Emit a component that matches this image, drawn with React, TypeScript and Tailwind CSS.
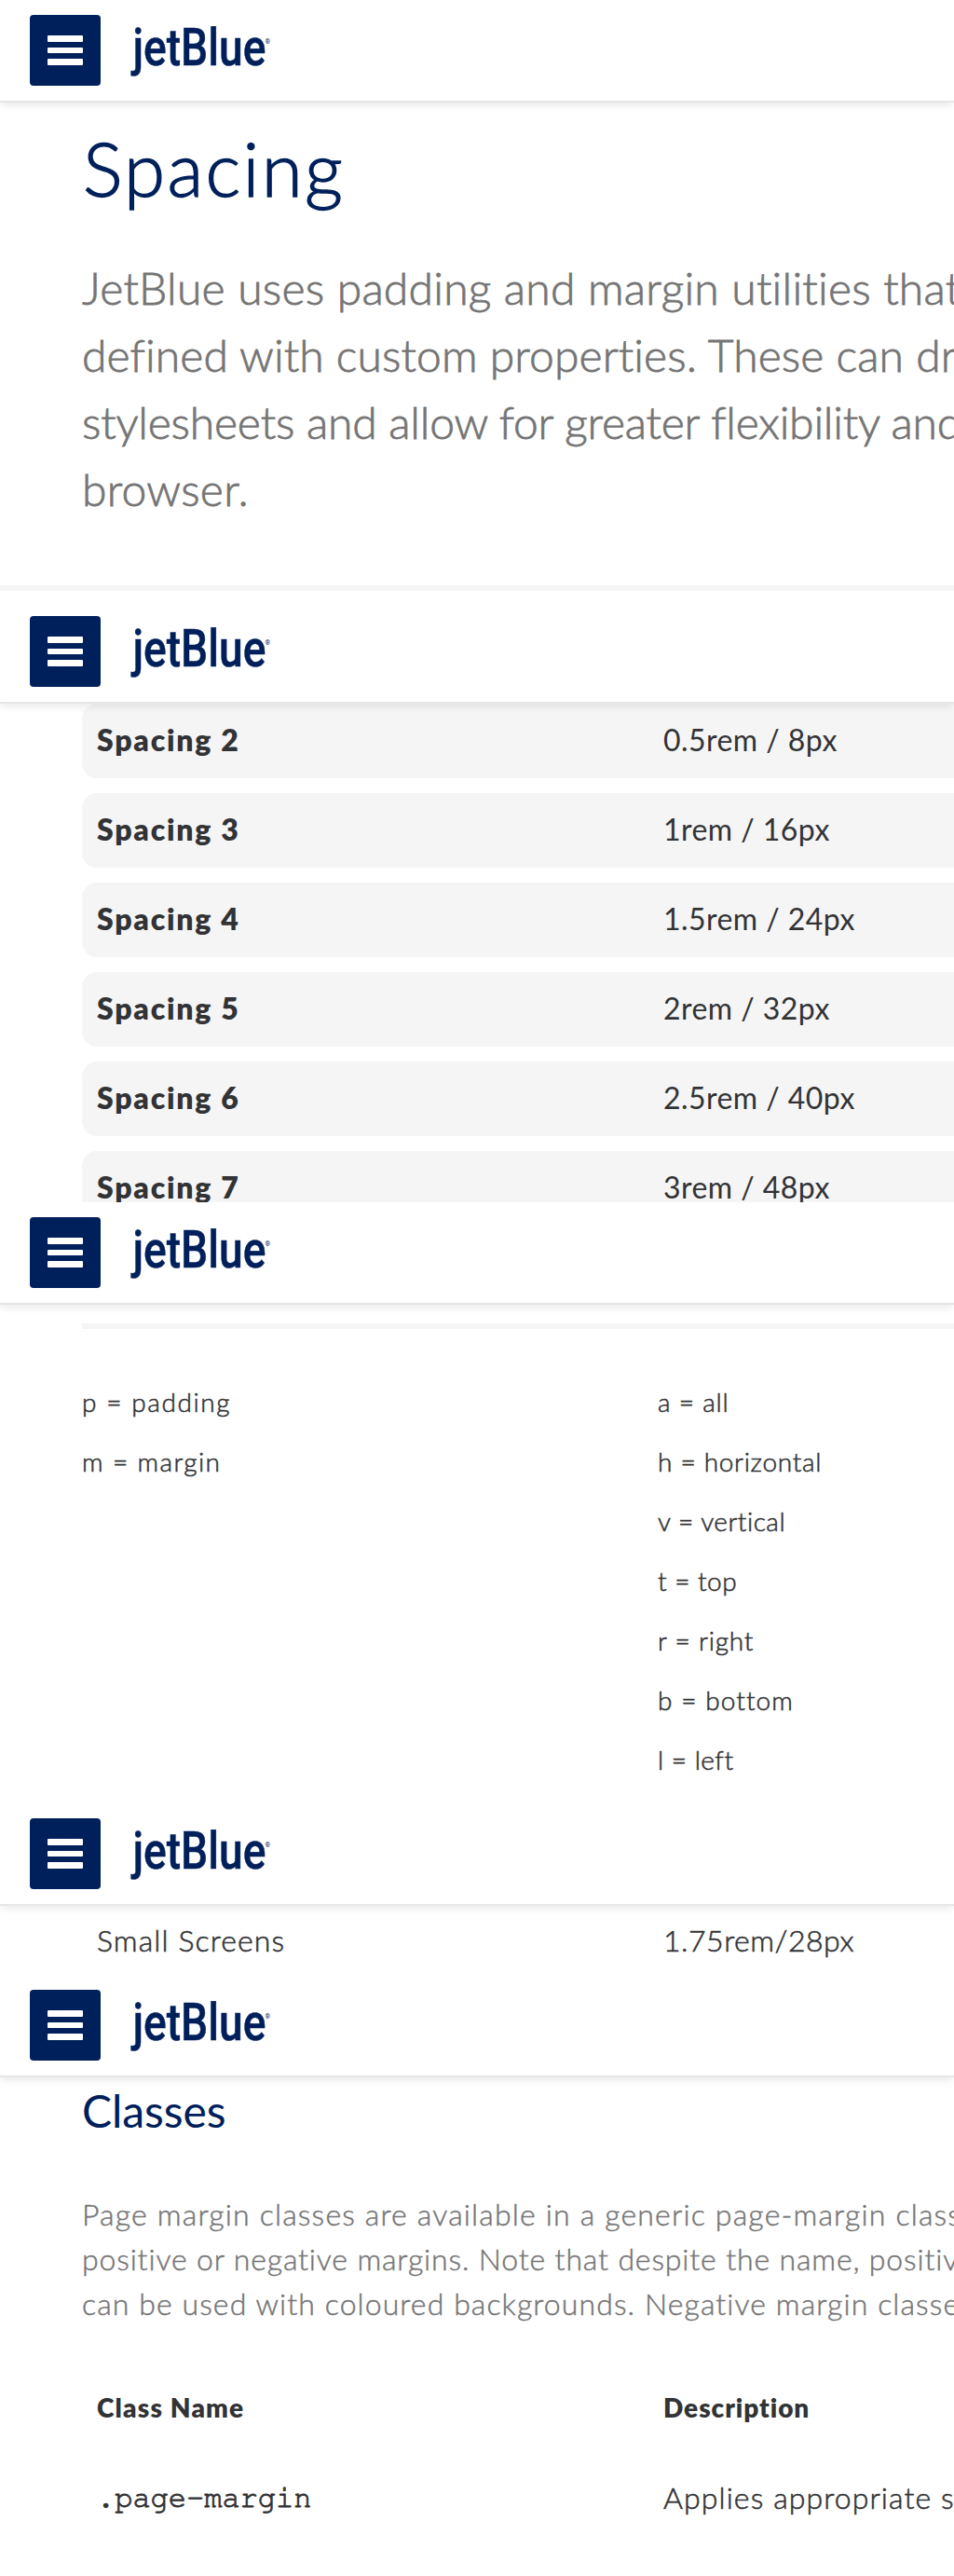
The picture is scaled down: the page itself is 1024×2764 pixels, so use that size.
import type { ReactNode } from "react";

function Logo() {
  return (
    <svg className="ml-8 mt-[8px] h-[60px] w-[156px]" viewBox="140 24 156 60" role="img" aria-label="jetBlue">
      <text
        transform="translate(142.4 69.5) scale(0.84 1)"
        className="fill-[#00205b] stroke-[#00205b] font-[Roboto] text-[55px] font-medium"
        strokeWidth="0.5"
      >
        jetBlue
      </text>
      <text x="284.4" y="47.2" className="fill-[#00205b] font-[Roboto] text-[7px]">
        ®
      </text>
    </svg>
  );
}

function Header() {
  return (
    <header className="relative z-10 flex h-[110px] shrink-0 items-start border-b-2 border-[#e6e6e6] bg-white px-8 pt-4 shadow-[0_4px_8px_-1px_rgba(0,0,0,0.09)]">
      <button className="flex size-[76px] flex-col items-center justify-center gap-[6.3px] rounded bg-[#00205b]" aria-label="Menu">
        <span className="h-[6.3px] w-[38px] rounded-[1px] bg-white" />
        <span className="h-[6.3px] w-[38px] rounded-[1px] bg-white" />
        <span className="h-[6.3px] w-[38px] rounded-[1px] bg-white" />
      </button>
      <Logo />
    </header>
  );
}

function Section({ height, children }: { height: string; children: ReactNode }) {
  return (
    <section className={`flex flex-col overflow-hidden ${height}`}>
      <Header />
      {children}
    </section>
  );
}

const spacings = [
  { name: "Spacing 2", value: "0.5rem / 8px" },
  { name: "Spacing 3", value: "1rem / 16px" },
  { name: "Spacing 4", value: "1.5rem / 24px" },
  { name: "Spacing 5", value: "2rem / 32px" },
  { name: "Spacing 6", value: "2.5rem / 40px" },
  { name: "Spacing 7", value: "3rem / 48px" },
];

const properties = [
  { text: "p = padding", tracking: "tracking-[1.6px]" },
  { text: "m = margin", tracking: "tracking-[1.4px]" },
];

const directions = [
  { text: "a = all", tracking: "tracking-[0.8px]" },
  { text: "h = horizontal", tracking: "tracking-[0.7px]" },
  { text: "v = vertical", tracking: "tracking-[0.5px]" },
  { text: "t = top", tracking: "tracking-[0.5px]" },
  { text: "r = right", tracking: "tracking-[0.8px]" },
  { text: "b = bottom", tracking: "tracking-[1.1px]" },
  { text: "l = left", tracking: "tracking-[0.5px]" },
];

export default function App() {
  return (
    <main className="w-full overflow-hidden whitespace-nowrap bg-white font-[Lato,sans-serif] text-[#323335]">
      <Section height="h-[645px]">
        <h1 className="mt-[22px] pl-[89px] text-[80px] font-light leading-[96px] tracking-[2.3px] text-[#00205b] [-webkit-text-stroke:1.3px_#00205b]">
          Spacing
        </h1>
        <p className="mt-[45px] flex flex-col pl-[88px] text-[48px] font-light leading-[72px] text-[#757575] [-webkit-text-stroke:0.8px_#757575]">
          <span className="tracking-[0.25px]">JetBlue uses padding and margin utilities that are</span>
          <span className="tracking-[0.1px]">defined with custom properties. These can drive</span>
          <span className="tracking-[-0.19px]">stylesheets and allow for greater flexibility and</span>
          <span className="tracking-[0.26px]">browser.</span>
        </p>
        <hr className="mt-[67px] h-1.5 shrink-0 border-0 bg-[#f5f5f5]" />
      </Section>

      <Section height="h-[645px]">
        <div className="flex flex-col gap-4 pl-[88px] text-[32px] leading-[48px]">
          {spacings.map((row) => (
            <div key={row.name} className="flex h-20 shrink-0 rounded-l-2xl bg-[#f5f5f5] pl-4 pt-[15px]">
              <span className="w-[608px] font-extrabold tracking-[1.75px]">{row.name}</span>
              <span className="tracking-[0.45px]">{row.value}</span>
            </div>
          ))}
        </div>
      </Section>

      <Section height="h-[645px]">
        <hr className="ml-[88px] mt-5 h-1.5 shrink-0 border-0 bg-[#f5f5f5]" />
        <div className="mt-[46px] flex pl-[88px] text-[28px] font-light leading-[64px] [-webkit-text-stroke:0.55px_#323335]">
          <ul className="w-[618px]">
            {properties.map((item) => (
              <li key={item.text} className={item.tracking}>{item.text}</li>
            ))}
          </ul>
          <ul>
            {directions.map((item) => (
              <li key={item.text} className={item.tracking}>{item.text}</li>
            ))}
          </ul>
        </div>
      </Section>

      <Section height="h-[184px]">
        <div className="flex pl-[104px] pt-[13px] text-[32px] font-light leading-[48px] [-webkit-text-stroke:0.55px_#323335]">
          <span className="w-[608px] tracking-[1.1px]">Small Screens</span>
          <span className="tracking-[0.5px]">1.75rem/28px</span>
        </div>
      </Section>

      <Section height="h-[645px]">
        <h2 className="mt-[8px] pl-[88px] text-[48px] leading-[56px] tracking-[-0.06px] text-[#00205b]">Classes</h2>
        <p className="mt-[59px] flex flex-col pl-[88px] text-[32px] font-light leading-[48px] text-[#757575] [-webkit-text-stroke:0.45px_#757575]">
          <span className="tracking-[1.17px]">Page margin classes are available in a generic page-margin class that</span>
          <span className="tracking-[0.85px]">positive or negative margins. Note that despite the name, positive</span>
          <span className="tracking-[1.09px]">can be used with coloured backgrounds. Negative margin classes</span>
        </p>
        <div className="mt-[63px] flex pl-[104px] text-[28px] font-extrabold leading-[48px]">
          <span className="w-[608px] tracking-[1.2px]">Class Name</span>
          <span className="tracking-[0.95px]">Description</span>
        </div>
        <div className="mt-[49px] flex pl-[104px] text-[32px] leading-[48px]">
          <code className="w-[608px] shrink-0 font-['Nimbus_Mono_PS',FreeMono,'Liberation_Mono',monospace] [-webkit-text-stroke:0.9px_#323335]">
            .page-margin
          </code>
          <span className="font-light tracking-[1.1px] [-webkit-text-stroke:0.55px_#323335]">Applies appropriate spacing</span>
        </div>
      </Section>
    </main>
  );
}
